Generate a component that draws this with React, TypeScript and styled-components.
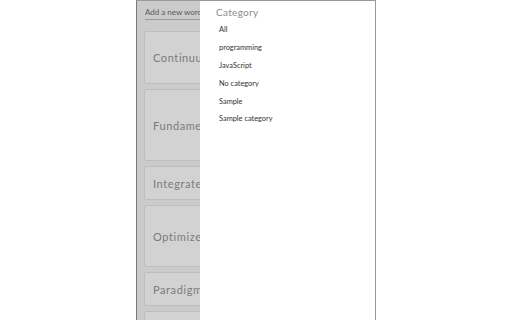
import React, { FunctionComponent } from 'react';
import styled, { createGlobalStyle } from 'styled-components';

const GlobalStyle = createGlobalStyle`
  html, body {
    margin: 0;
    padding: 0;
    background: #ffffff;
    font-family: Lato, "Noto Sans", sans-serif;
  }
`;

const Page = styled.div`
  width: 512px;
  height: 320px;
  display: flex;
  padding-left: 136px;
  box-sizing: border-box;
`;

const Frame = styled.div`
  position: relative;
  width: 238px;
  height: 319px;
  border: 1px solid #9a9a9a;
  border-left: 1px solid #7a7a7a;
  border-bottom: 1px solid #b0b0b0;
  background: #f4f4f4;
  overflow: hidden;
`;

const Main = styled.div`
  display: flex;
  flex-direction: column;
  padding: 6px 0 0 7px;
`;

const WordInput = styled.input`
  width: 200px;
  margin: 0 0 11px 1px;
  padding: 0 0 2px 0;
  border: none;
  border-bottom: 1px solid #b8b8c0;
  background: transparent;
  font-family: Lato, sans-serif;
  font-size: 8px;
  color: #555;
  outline: none;
  &::placeholder {
    color: #707070;
  }
`;

const CardList = styled.div`
  display: flex;
  flex-direction: column;
  gap: 5px;
`;

const Card = styled.div<{ height: number }>`
  height: ${props => props.height}px;
  width: 220px;
  flex-shrink: 0;
  box-sizing: border-box;
  display: flex;
  align-items: center;
  padding-left: 8px;
  background: #fdfdfd;
  border: 1px solid #e4e4ec;
  border-radius: 2px;
  font-size: 11px;
  letter-spacing: 0.6px;
  color: #959595;
`;

const Overlay = styled.div`
  position: absolute;
  inset: 0;
  background: rgba(0, 0, 0, 0.17);
`;

const Drawer = styled.div`
  position: absolute;
  top: 0;
  right: 0;
  bottom: 0;
  width: 175px;
  background: #ffffff;
  display: flex;
  flex-direction: column;
  padding: 5px 0 0 16px;
  box-sizing: border-box;
`;

const DrawerTitle = styled.div`
  font-size: 10px;
  letter-spacing: 0.3px;
  color: #8a8a8a;
  margin-bottom: 3px;
`;

const CategoryItem = styled.div`
  height: 17.8px;
  display: flex;
  align-items: center;
  padding-left: 3px;
  font-size: 7.4px;
  color: #333;
`;

const words = [
  { name: 'Continuum', height: 53 },
  { name: 'Fundamental', height: 72 },
  { name: 'Integrate', height: 34 },
  { name: 'Optimized', height: 62 },
  { name: 'Paradigm', height: 34 },
  { name: '', height: 40 },
];

const categories = ['All', 'programming', 'JavaScript', 'No category', 'Sample', 'Sample category'];

const App: FunctionComponent = () => {
  return (
    <Page>
      <GlobalStyle />
      <Frame>
        <Main>
          <WordInput placeholder='Add a new word' />
          <CardList>
            {words.map((word, index) => (
              <Card key={index} height={word.height}>{word.name}</Card>
            ))}
          </CardList>
        </Main>
        <Overlay />
        <Drawer>
          <DrawerTitle>Category</DrawerTitle>
          {categories.map(category => (
            <CategoryItem key={category}>{category}</CategoryItem>
          ))}
        </Drawer>
      </Frame>
    </Page>
  );
}

export default App;
